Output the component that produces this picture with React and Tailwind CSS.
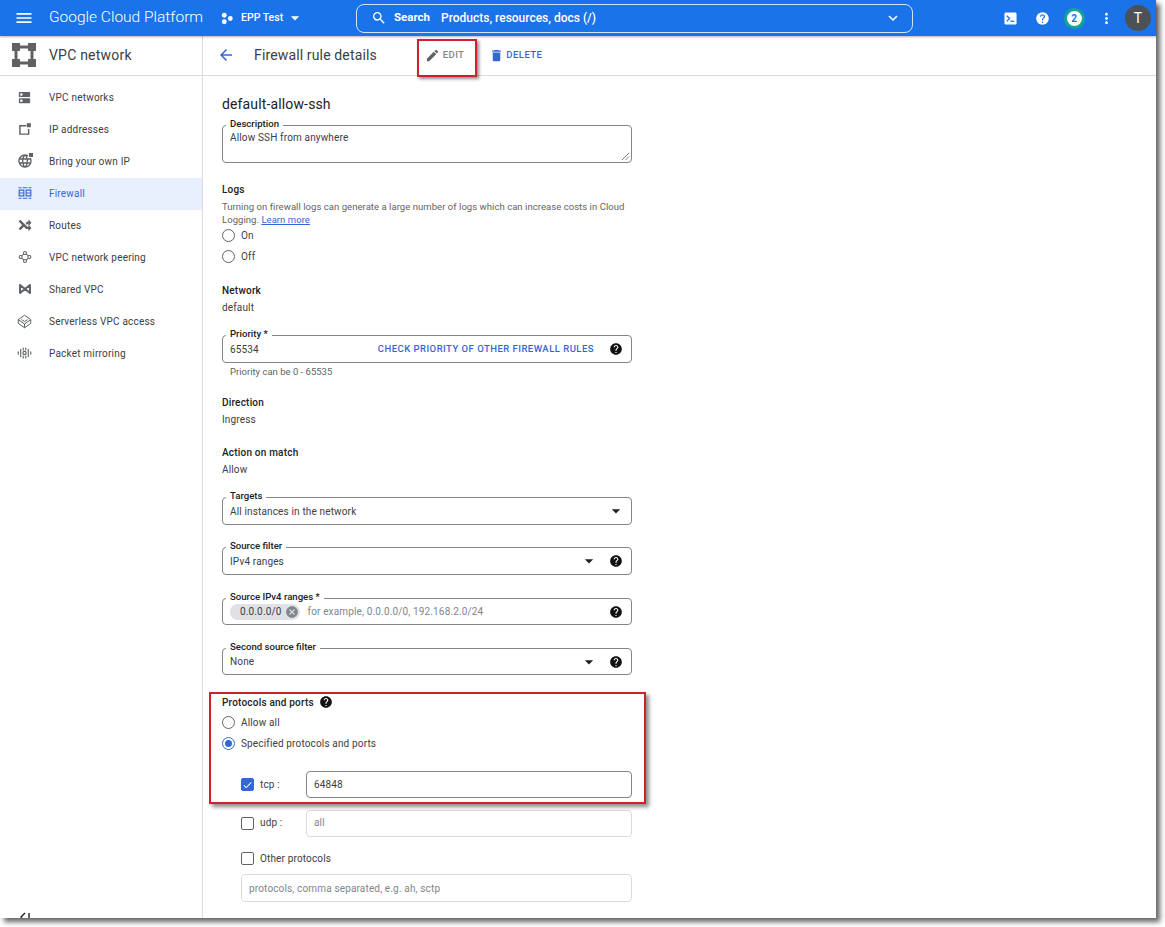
import React from 'react';
import {
  MdMenu, MdArrowBack, MdEdit, MdDelete, MdSearch, MdKeyboardArrowDown, MdHelp, MdMoreVert,
  MdArrowDropDown, MdCancel, MdCheck, MdDns, MdLanguage,
} from 'react-icons/md';

const IpIcon = () => (
  <svg viewBox="0 0 24 24" className="w-[14px] h-[14px]" fill="currentColor">
    <path d="M2 5h12v2.5H4.5v12H17V12h2.5v10H2z" />
    <path d="M15 2h7v7h-7z" />
  </svg>
);

const GlobeIcon = () => (
  <span className="relative flex">
    <MdLanguage className="w-[16px] h-[16px]" />
    <span className="absolute right-0 top-0 w-[5px] h-[5px] bg-white">
      <span className="block w-[4px] h-[4px] ml-[1px] bg-[#5f6368]" />
    </span>
  </span>
);

const FirewallIcon = () => (
  <svg viewBox="0 0 24 24" className="w-[14px] h-[14px]" fill="currentColor">
    <path d="M1 2h5v2H1zM8 2h8v2H8zM18 2h5v2h-5zM1 20h5v2H1zM8 20h8v2H8zM18 20h5v2h-5z" />
    <path d="M1 6h10v12H1zm2 2v3h6V8zm0 5v3h6v-3zM13 6h10v12H13zm2 2v3h6V8zm0 5v3h6v-3z" fillRule="evenodd" />
  </svg>
);

const RoutesIcon = () => (
  <svg viewBox="0 0 24 24" className="w-[14px] h-[14px]" fill="currentColor">
    <path d="M1 6l3-3 12 12h2v-4l5 6-5 6v-4h-4L1 6z" />
    <path d="M1 18l7-7 3 3-7 7zM13 9l3-3h2V2l5 6-5 6v-4h-1l-2 2z" />
  </svg>
);

const PeeringIcon = () => (
  <svg viewBox="0 0 24 24" className="w-[14px] h-[14px]" fill="none" stroke="currentColor" strokeWidth="1.8">
    <circle cx="12" cy="5" r="2.6" />
    <circle cx="12" cy="19" r="2.6" />
    <circle cx="4.5" cy="12" r="2.6" />
    <circle cx="19.5" cy="12" r="2.6" />
    <path d="M10 7l-4 3M14 7l4 3M10 17l-4-3M14 17l4-3" />
  </svg>
);

const SharedIcon = () => (
  <svg viewBox="0 0 24 24" className="w-[14px] h-[14px]" fill="none" stroke="currentColor" strokeWidth="3.4">
    <path d="M3.5 5v14l8.500-7 8.500 7V5l-8.500 7z" strokeLinejoin="round" />
  </svg>
);

const ServerlessIcon = () => (
  <svg viewBox="0 0 24 24" className="w-[15px] h-[15px]" fill="none" stroke="currentColor" strokeWidth="1.6">
    <path d="M12 2l10 7-10 7L2 9z" />
    <path d="M2 9v6l10 7 10-7V9M12 16v6M7 9l5 3 5-3" />
  </svg>
);

const MirrorIcon = () => (
  <svg viewBox="0 0 24 24" className="w-[16px] h-[16px]" fill="none" stroke="currentColor" strokeWidth="1.8" strokeLinecap="round">
    <path d="M2 10v4M6 6v12M18 6v12M22 10v4M10 7V4M14 7V4M10 17v3M14 17v3" />
    <circle cx="12" cy="12" r="2.6" />
  </svg>
);

const VpcLogo = () => (
  <svg viewBox="0 0 24 24" className="w-[24px] h-[24px] text-[#616161] shrink-0" fill="currentColor">
    <path d="M0 0h8v8H0zM16 0h8v8h-8zM0 16h8v8H0zM16 16h8v8h-8z" />
    <path d="M8 2.500h8v3H8zM8 18.500h8v3H8zM2.500 8h3v8h-3zM18.500 8h3v8h-3z" />
  </svg>
);

const ProjectDots = () => (
  <svg viewBox="0 0 14 14" className="w-[13px] h-[13px] shrink-0" fill="currentColor">
    <circle cx="3.5" cy="3.5" r="2.6" />
    <circle cx="3.5" cy="10.5" r="2.6" />
    <circle cx="10" cy="7" r="2.6" />
  </svg>
);

const TerminalIcon = () => (
  <svg viewBox="0 0 14 14" className="w-[13px] h-[13px]">
    <rect x="0.5" y="0.5" width="13" height="13" rx="1.5" fill="#fff" />
    <path d="M3 4l3 3-3 3" fill="none" stroke="#1a73e8" strokeWidth="1.4" />
    <path d="M7 10h4" stroke="#1a73e8" strokeWidth="1.4" />
  </svg>
);

const navItems = [
  { label: 'VPC networks', icon: <MdDns className="w-[15px] h-[15px]" /> },
  { label: 'IP addresses', icon: <IpIcon /> },
  { label: 'Bring your own IP', icon: <GlobeIcon /> },
  { label: 'Firewall', icon: <FirewallIcon />, active: true },
  { label: 'Routes', icon: <RoutesIcon /> },
  { label: 'VPC network peering', icon: <PeeringIcon /> },
  { label: 'Shared VPC', icon: <SharedIcon /> },
  { label: 'Serverless VPC access', icon: <ServerlessIcon /> },
  { label: 'Packet mirroring', icon: <MirrorIcon /> },
];

const Field = ({ label, className = '', children }) => (
  <div className={`relative flex items-center border border-[#80868b] rounded-[4px] pl-[7px] pr-[7px] ${className}`}>
    <span className="absolute left-[3px] top-[-9px] bg-white px-[4px] text-[9.6px] leading-[13px] font-medium text-[#202124]">
      {label}
    </span>
    {children}
  </div>
);

const Help = ({ className = '' }) => <MdHelp className={`w-[14px] h-[14px] text-[#111] shrink-0 ${className}`} />;

const Caret = ({ className = '' }) => <MdArrowDropDown className={`w-[20px] h-[20px] text-[#202124] shrink-0 ${className}`} />;

const Radio = ({ label, checked }) => (
  <div className="flex items-center h-[21px]">
    <span className={`w-[13px] h-[13px] rounded-full border flex items-center justify-center shrink-0 ${checked ? 'border-[#3367d6]' : 'border-[#5f6368]'}`}>
      {checked && <span className="w-[7px] h-[7px] rounded-full bg-[#3367d6]" />}
    </span>
    <span className="ml-[6px] text-[10px] tracking-[0.015em] text-[#3c4043]">{label}</span>
  </div>
);

const Checkbox = ({ checked }) => (
  <span className={`w-[13px] h-[13px] rounded-[2px] border flex items-center justify-center shrink-0 ${checked ? 'bg-[#3367d6] border-[#3367d6]' : 'border-[#5f6368]'}`}>
    {checked && <MdCheck className="w-[12px] h-[12px] text-white" />}
  </span>
);

const Label = ({ className = '', children }) => (
  <div className={`h-[14px] leading-[14px] text-[10px] tracking-[0.02em] font-medium text-[#202124] ${className}`}>{children}</div>
);

const Value = ({ className = '', children }) => (
  <div className={`h-[14px] leading-[14px] text-[10px] tracking-[0.015em] text-[#3c4043] ${className}`}>{children}</div>
);

export default function App() {
  return (
    <div className="w-[1165px] h-[927px] bg-white overflow-hidden font-['Roboto',sans-serif]">
      <div className="relative w-[1156px] h-[918px] flex flex-col bg-white shadow-[4px_4px_5px_rgba(0,0,0,0.6)]">
        {/* Top bar */}
        <header className="h-[36px] shrink-0 bg-[#1a73e8] text-white flex items-center shadow-[0_1px_2px_rgba(0,0,0,0.3)] z-10">
          <MdMenu className="w-[20px] h-[20px] ml-[14px] shrink-0" />
          <span className="ml-[15px] w-[172px] shrink-0 text-[15.5px] font-light whitespace-nowrap">Google Cloud Platform</span>
          <ProjectDots />
          <span className="ml-[7px] w-[42px] shrink-0 text-[10.5px] font-medium whitespace-nowrap">EPP Test</span>
          <MdArrowDropDown className="w-[20px] h-[20px] ml-[2px] shrink-0" />
          <div className="ml-[51px] w-[557px] h-[29px] shrink-0 border border-white/80 rounded-[8px] flex items-center pl-[14px] pr-[10px]">
            <MdSearch className="w-[16px] h-[16px] shrink-0" />
            <span className="ml-[7px] text-[11.5px] font-bold">Search</span>
            <span className="ml-[11px] text-[12px] font-medium">Products, resources, docs (/)</span>
            <MdKeyboardArrowDown className="w-[18px] h-[18px] ml-auto shrink-0" />
          </div>
          <div className="ml-[81px] flex items-center shrink-0">
            <span className="w-[32px] flex justify-center"><TerminalIcon /></span>
            <span className="w-[32px] flex justify-center"><MdHelp className="w-[15px] h-[15px]" /></span>
            <span className="w-[32px] flex justify-center">
              <span className="w-[21px] h-[21px] rounded-full bg-white border-[3px] border-[#12a594] flex items-center justify-center text-[10px] font-bold text-[#1a73e8]">2</span>
            </span>
            <span className="w-[32px] flex justify-center"><MdMoreVert className="w-[17px] h-[17px]" /></span>
            <span className="w-[26px] h-[26px] ml-[3px] rounded-full bg-[#4a5157] flex items-center justify-center text-[14px]">T</span>
          </div>
        </header>

        {/* Title row */}
        <div className="h-[40px] shrink-0 flex border-b border-[#dadce0]">
          <div className="w-[203px] shrink-0 flex items-center pl-[12px] pb-[1px] border-r border-[#dadce0]">
            <VpcLogo />
            <span className="ml-[13px] text-[14px] tracking-[0.015em] text-[#3c4043]">VPC network</span>
          </div>
          <div className="flex items-center pb-[1px]">
            <MdArrowBack className="ml-[14px] w-[18px] h-[18px] text-[#3367d6]" />
            <span className="ml-[19px] text-[14px] tracking-[0.01em] text-[#3c4043] whitespace-nowrap">Firewall rule details</span>
            <MdEdit className="ml-[48px] w-[15px] h-[15px] text-[#5f6368]" />
            <span className="ml-[3px] text-[9.5px] font-medium tracking-[0.04em] text-[#80868b]">EDIT</span>
            <MdDelete className="ml-[25px] w-[15px] h-[15px] text-[#3367d6]" />
            <span className="ml-[2px] text-[9.5px] font-medium tracking-[0.05em] text-[#3367d6]">DELETE</span>
          </div>
        </div>

        <div className="flex flex-1 min-h-0">
          {/* Sidebar */}
          <aside className="w-[203px] shrink-0 border-r border-[#dadce0] flex flex-col pt-[6px]">
            {navItems.map((item) => (
              <div
                key={item.label}
                className={`h-[32px] flex items-center pl-[17px] pb-[2px] ${item.active ? 'bg-[#e8f0fe] text-[#3367d6]' : 'text-[#5f6368]'}`}
              >
                <span className="w-[15px] flex justify-center shrink-0">{item.icon}</span>
                <span className={`ml-[17px] text-[10px] tracking-[0.02em] whitespace-nowrap ${item.active ? '' : 'text-[#3c4043]'}`}>{item.label}</span>
              </div>
            ))}
            <div className="mt-auto h-[6px] pl-[20px] flex items-start overflow-hidden text-[#202124]">
              <svg viewBox="0 0 10 10" className="w-[10px] h-[10px] shrink-0" fill="none" stroke="currentColor" strokeWidth="1.4">
                <path d="M5 1L1 5l4 4M9 1v8" />
              </svg>
            </div>
          </aside>

          {/* Form */}
          <main className="flex-1 min-w-0 pl-[19px] pt-[18px] overflow-hidden">
            <div className="w-[410px]">
              <div className="h-[20px] leading-[20px] text-[14px] tracking-[0.01em] text-[#202124]">default-allow-ssh</div>

              <Field label="Description" className="mt-[11px] h-[38px] !items-start pt-[5px]">
                <span className="text-[10px] leading-[14px] tracking-[0.015em] text-[#3c4043]">Allow SSH from anywhere</span>
                <svg viewBox="0 0 10 10" className="absolute right-[1px] bottom-[1px] w-[9px] h-[9px]" stroke="#5f6368" strokeWidth="0.9">
                  <path d="M1 9l8-8M5 9l4-4" />
                </svg>
              </Field>

              <Label className="mt-[20px]">Logs</Label>
              <p className="mt-[3px] text-[9.5px] leading-[13px] tracking-[0.005em] text-[#5f6368]">
                Turning on firewall logs can generate a large number of logs which can increase costs in Cloud Logging.{' '}
                <span className="text-[#3367d6] underline">Learn more</span>
              </p>
              <div className="-mt-[1px]">
                <Radio label="On" />
                <Radio label="Off" />
              </div>

              <Label className="mt-[17px]">Network</Label>
              <Value className="mt-[3px]">default</Value>

              <Field label="Priority *" className="mt-[20px] h-[28px]">
                <span className="text-[10px] tracking-[0.015em] text-[#3c4043]">65534</span>
                <span className="ml-auto text-[9.5px] font-medium tracking-[0.05em] text-[#3367d6]">CHECK PRIORITY OF OTHER FIREWALL RULES</span>
                <Help className="ml-[15px] mr-[1px]" />
              </Field>
              <div className="mt-[2px] pl-[8px] h-[13px] leading-[13px] text-[9.5px] text-[#5f6368]">Priority can be 0 - 65535</div>

              <Label className="mt-[18px]">Direction</Label>
              <Value className="mt-[3px]">Ingress</Value>

              <Label className="mt-[19px]">Action on match</Label>
              <Value className="mt-[3px]">Allow</Value>

              <Field label="Targets" className="mt-[20px] h-[28px]">
                <span className="text-[10px] tracking-[0.015em] text-[#3c4043]">All instances in the network</span>
                <Caret className="ml-auto -mr-[2px]" />
              </Field>

              <Field label="Source filter" className="mt-[22px] h-[28px]">
                <span className="text-[10px] tracking-[0.015em] text-[#3c4043]">IPv4 ranges</span>
                <Caret className="ml-auto" />
                <Help className="ml-[10px] mr-[1px]" />
              </Field>

              <Field label="Source IPv4 ranges *" className="mt-[23px] h-[27px]">
                <span className="h-[16px] flex items-center rounded-full bg-[#dfe1e5] pl-[10px] pr-[1px] text-[10px] tracking-[0.015em] text-[#3c4043]">
                  0.0.0.0/0
                  <MdCancel className="ml-[3px] w-[14px] h-[14px] text-[#80868b]" />
                </span>
                <span className="ml-[8px] text-[10px] tracking-[0.015em] text-[#80868b]">for example, 0.0.0.0/0, 192.168.2.0/24</span>
                <Help className="ml-auto mr-[1px]" />
              </Field>

              <Field label="Second source filter" className="mt-[23px] h-[27px]">
                <span className="text-[10px] tracking-[0.015em] text-[#3c4043]">None</span>
                <Caret className="ml-auto" />
                <Help className="ml-[10px] mr-[1px]" />
              </Field>

              <div className="mt-[20px] h-[14px] flex items-center">
                <span className="text-[10px] tracking-[0.02em] font-medium text-[#202124]">Protocols and ports</span>
                <Help className="ml-[5px]" />
              </div>
              <div className="mt-[3px]">
                <Radio label="Allow all" />
                <Radio label="Specified protocols and ports" checked />
              </div>

              <div className="mt-[17px] flex items-center pl-[19px] h-[27px]">
                <Checkbox checked />
                <span className="ml-[6px] w-[46px] text-[10px] tracking-[0.015em] text-[#3c4043]">tcp :</span>
                <div className="flex-1 h-full flex items-center pl-[7px] border border-[#80868b] rounded-[4px] text-[10px] tracking-[0.015em] text-[#3c4043]">64848</div>
              </div>
              <div className="mt-[12px] flex items-center pl-[19px] h-[27px]">
                <Checkbox />
                <span className="ml-[6px] w-[46px] text-[10px] tracking-[0.015em] text-[#3c4043] pb-[2px]">udp :</span>
                <div className="flex-1 h-full flex items-center pl-[7px] pb-[2px] border border-[#dadce0] rounded-[4px] text-[10px] tracking-[0.015em] text-[#80868b]">all</div>
              </div>
              <div className="mt-[13px] flex items-center pl-[19px] h-[16px]">
                <Checkbox />
                <span className="ml-[6px] text-[10px] tracking-[0.015em] text-[#3c4043]">Other protocols</span>
              </div>
              <div className="mt-[8px] ml-[19px] h-[28px] flex items-center pl-[7px] border border-[#dadce0] rounded-[4px] text-[10px] tracking-[0.015em] text-[#80868b]">
                protocols, comma separated, e.g. ah, sctp
              </div>
            </div>
          </main>
        </div>

        {/* Annotation boxes over the page */}
        <div className="absolute left-[417px] top-[39px] w-[60px] h-[38px] border-2 border-[#d0202c] shadow-[2px_2px_3px_rgba(0,0,0,0.45)] z-20" />
        <div className="absolute left-[209px] top-[692px] w-[437px] h-[112px] border-2 border-[#d0202c] shadow-[3px_3px_4px_rgba(0,0,0,0.45)] z-20" />
      </div>
    </div>
  );
}
